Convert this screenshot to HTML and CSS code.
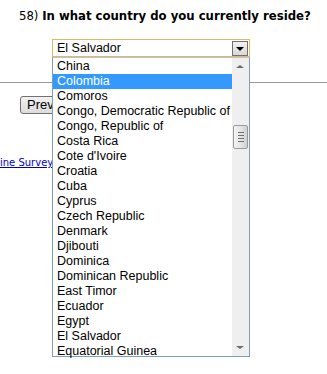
FILE: index.html
```html
<!DOCTYPE html>
<html lang="en">
<head>
    <meta charset="UTF-8">
    <meta name="viewport" content="width=device-width, initial-scale=1.0">
    <title>Survey - Question 58</title>
    <link rel="stylesheet" href="styles.css">
</head>
<body>
    <div class="question">
        <span class="num">58)</span> <b>In what country do you currently reside?</b>
    </div>

    <div class="field">
        <div class="select">
            <span>El Salvador</span>
            <span class="arrow"></span>
        </div>
        <div class="dropdown">
            <ul class="options">
                <li>China</li>
                <li class="active">Colombia</li>
                <li>Comoros</li>
                <li>Congo, Democratic Republic of</li>
                <li>Congo, Republic of</li>
                <li>Costa Rica</li>
                <li>Cote d'Ivoire</li>
                <li>Croatia</li>
                <li>Cuba</li>
                <li>Cyprus</li>
                <li>Czech Republic</li>
                <li>Denmark</li>
                <li>Djibouti</li>
                <li>Dominica</li>
                <li>Dominican Republic</li>
                <li>East Timor</li>
                <li>Ecuador</li>
                <li>Egypt</li>
                <li>El Salvador</li>
                <li>Equatorial Guinea</li>
            </ul>
            <div class="scrollbar">
                <span class="up"></span>
                <span class="thumb"><i></i><i></i><i></i><i></i></span>
                <span class="down"></span>
            </div>
        </div>
    </div>

    <hr class="divider">

    <div class="nav">
        <button class="btn">Previous</button>
    </div>

    <div class="footer">
        <a href="#">Online Survey Software</a>
    </div>
</body>
</html>
```

FILE: styles.css
```css
html, body {
    height: 100%;
}
body {
    margin: 0;
    min-height: 374px;
    font-family: "Liberation Sans", Arial, sans-serif;
    font-size: 12.5px;
    color: #000;
    background: #fff;
}

.question {
    padding: 8px 0 0 19px;
    height: 31px;
    font-family: "DejaVu Sans", Verdana, sans-serif;
    font-size: 11.7px;
    line-height: 16px;
}
.question b {
    font-weight: bold;
}

.field {
    position: relative;
    margin-left: 52px;
    width: 198px;
}

.select {
    height: 16px;
    border: 1px solid #e3b862;
    display: flex;
    align-items: center;
    justify-content: space-between;
    padding: 0 1px 0 4px;
    font-size: 12.5px;
    line-height: 16px;
}
.select .arrow {
    width: 14px;
    height: 13px;
    border: 1px solid #707070;
    background: linear-gradient(#f2f2f2, #d8d8d8);
    position: relative;
}
.select .arrow::after {
    content: "";
    position: absolute;
    left: 3px;
    top: 5px;
    border-left: 4px solid transparent;
    border-right: 4px solid transparent;
    border-top: 4px solid #000;
}

.dropdown {
    position: absolute;
    top: 18px;
    left: 0;
    width: 196px;
    height: 298px;
    border: 1px solid #7f9db9;
    border-top: 1px solid #b5c4d6;
    background: #fff;
    display: flex;
    z-index: 2;
}
.options {
    list-style: none;
    margin: 0;
    padding: 1px 0 0 0;
    flex: 1;
}
.options li {
    height: 15px;
    line-height: 15px;
    padding-left: 4px;
    white-space: nowrap;
    overflow: hidden;
}
.options li.active {
    background: #3399ff;
    color: #fff;
}

.scrollbar {
    width: 17px;
    background: #efefef;
    position: relative;
}
.scrollbar .up,
.scrollbar .down {
    position: absolute;
    left: 4px;
    border-left: 4px solid transparent;
    border-right: 4px solid transparent;
}
.scrollbar .up {
    top: 7px;
    border-bottom: 3px solid #6a6a6a;
}
.scrollbar .down {
    bottom: 7px;
    border-top: 3px solid #6a6a6a;
}
.scrollbar .thumb {
    position: absolute;
    top: 67px;
    left: 1px;
    width: 13px;
    height: 22px;
    border: 1px solid #9a9a9a;
    border-radius: 2px;
    background: linear-gradient(90deg, #f4f4f4, #e2e2e2 60%, #cfcfcf);
    display: flex;
    flex-direction: column;
    justify-content: center;
    align-items: center;
    gap: 2px;
}
.scrollbar .thumb i {
    display: block;
    width: 6px;
    height: 1px;
    background: #707070;
}

.divider {
    margin: 25px 0 0 0;
    border: 0;
    border-top: 1px solid #999;
    height: 0;
}

.nav {
    padding: 13px 0 0 20px;
}
.btn {
    font-family: "Liberation Sans", Arial, sans-serif;
    font-size: 13px;
    height: 18px;
    padding: 0 6px;
    border: 1px solid #707070;
    border-radius: 3px;
    background: linear-gradient(#f2f2f2, #dcdcdc);
    line-height: 14px;
}

.footer {
    padding-top: 43px;
    margin-left: -17px;
    font-family: "DejaVu Sans", Verdana, sans-serif;
    font-size: 10px;
}
.footer a {
    color: #00c;
}
```
